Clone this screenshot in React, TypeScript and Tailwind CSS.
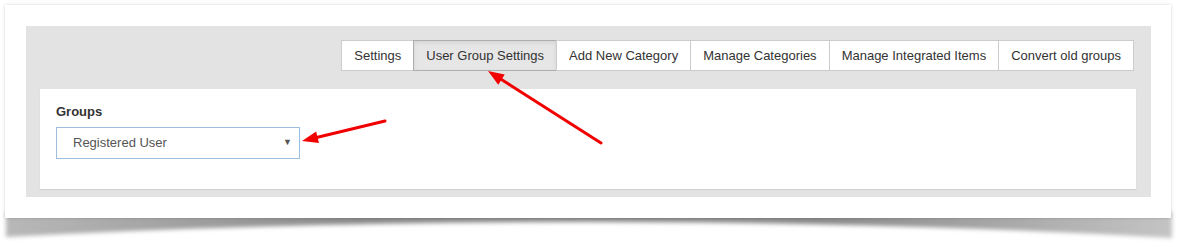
import React from "react";

const tabs = [
  "Settings",
  "User Group Settings",
  "Add New Category",
  "Manage Categories",
  "Manage Integrated Items",
  "Convert old groups",
];

function Arrow({ x1, y1, x2, y2 }: { x1: number; y1: number; x2: number; y2: number }) {
  const a = Math.atan2(y2 - y1, x2 - x1);
  const len = 16;
  const w = 6;
  const bx = x2 - Math.cos(a) * len;
  const by = y2 - Math.sin(a) * len;
  const p1 = `${bx + Math.sin(a) * w},${by - Math.cos(a) * w}`;
  const p2 = `${bx - Math.sin(a) * w},${by + Math.cos(a) * w}`;
  return (
    <g>
      <line x1={x1} y1={y1} x2={bx} y2={by} stroke="#f20000" strokeWidth="3" strokeLinecap="round" />
      <polygon points={`${x2},${y2} ${p1} ${p2}`} fill="#f20000" />
    </g>
  );
}

export default function App() {
  return (
    <div
      className="relative h-[247px] w-[1185px] overflow-hidden bg-white pl-[5px] pt-[5px]"
      style={{ fontFamily: '"Liberation Sans", Arial, sans-serif' }}
    >
      {/* curled paper shadow */}
      <svg className="absolute left-0 top-0" width="1185" height="247">
        <defs>
          <filter id="blur" x="-5%" y="-50%" width="110%" height="200%">
            <feGaussianBlur stdDeviation="2" />
          </filter>
          <linearGradient id="sh" x1="0" x2="1" y1="0" y2="0">
            <stop offset="0" stopColor="#b8b8b8" />
            <stop offset="0.3" stopColor="#8a8a8a" />
            <stop offset="0.7" stopColor="#8a8a8a" />
            <stop offset="1" stopColor="#c4c4c4" />
          </linearGradient>
        </defs>
        <path
          d="M6 212 L1172 212 L1172 238 Q900 222 588 222 Q280 222 6 237 Z"
          fill="url(#sh)"
          filter="url(#blur)"
        />
      </svg>

      <div className="relative h-[213px] w-[1166px] bg-white pl-[21px] pt-[21px] shadow-[0_0_3px_rgba(0,0,0,0.18)]">
        <div className="flex h-[171px] w-[1125px] flex-col bg-[#e3e3e3] pl-[14px] pr-[15px] pt-[14px]">
          <div className="flex justify-end pr-[2px]">
            {tabs.map((t, i) => (
              <div
                key={t}
                className={
                  i === 1
                    ? "-ml-px flex h-[31px] items-center border border-[#adadad] bg-[#e6e6e6] px-[12px] text-[13px] text-[#333] shadow-[inset_0_2px_4px_rgba(0,0,0,0.08)]"
                    : "-ml-px flex h-[31px] items-center border border-[#cccccc] bg-white px-[12px] text-[13px] text-[#333]"
                }
              >
                {t}
              </div>
            ))}
          </div>
          <div className="mt-[18px] h-[100px] bg-white pl-[16px] pt-[14px] shadow-[0_1px_1px_rgba(0,0,0,0.08)]">
            <div className="text-[13px] font-bold leading-[18px] text-[#333]">Groups</div>
            <div className="mt-[6px] flex h-[32px] w-[244px] items-center justify-between border border-[#9dbfdd] pl-[16px] pr-[7px] text-[13px] text-[#555]">
              <span>Registered User</span>
              <span className="text-[9px] text-[#555]">▼</span>
            </div>
          </div>
        </div>
      </div>

      <svg className="pointer-events-none absolute left-0 top-0" width="1185" height="247">
        <Arrow x1={601} y1={143} x2={488} y2={71} />
        <Arrow x1={385} y1={121} x2={302} y2={141} />
      </svg>
    </div>
  );
}
